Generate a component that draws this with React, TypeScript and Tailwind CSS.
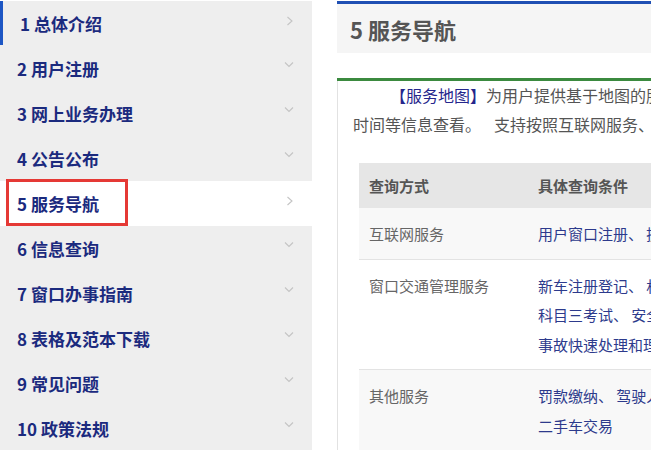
import React from "react";

const FONT = { fontFamily: '"Noto Sans CJK SC", "Noto Sans", sans-serif' };

const items = [
  { label: "1 总体介绍", dir: "right", active: true },
  { label: "2 用户注册", dir: "down" },
  { label: "3 网上业务办理", dir: "down" },
  { label: "4 公告公布", dir: "down" },
  { label: "5 服务导航", dir: "right", selected: true },
  { label: "6 信息查询", dir: "down" },
  { label: "7 窗口办事指南", dir: "down" },
  { label: "8 表格及范本下载", dir: "down" },
  { label: "9 常见问题", dir: "down" },
  { label: "10 政策法规", dir: "down" },
];

function Chevron({ dir }: { dir: string }) {
  if (dir === "right") {
    return (
      <svg width="8" height="10" viewBox="0 0 8 10" className="mb-[6px]">
        <path d="M1.5 1 L6 5 L1.5 9" fill="none" stroke="#c4c4c4" strokeWidth="1.1" />
      </svg>
    );
  }
  return (
    <svg width="10" height="7" viewBox="0 0 10 7" className="mb-[8px]">
      <path d="M1 1.5 L5 5.5 L9 1.5" fill="none" stroke="#c4c4c4" strokeWidth="1.1" />
    </svg>
  );
}

const rows = [
  { name: "互联网服务", lines: ["用户窗口注册、 提交申请、 网上预约"], bg: "bg-[#f8f8f8]" },
  {
    name: "窗口交通管理服务",
    lines: ["新车注册登记、 机动车转移登记", "科目三考试、 安全文明驾驶常识考试", "事故快速处理和理赔"],
    bg: "bg-white",
  },
  { name: "其他服务", lines: ["罚款缴纳、 驾驶人体检", "二手车交易"], bg: "bg-[#f8f8f8]" },
];

export default function App() {
  return (
    <div className="relative w-[651px] h-[450px] overflow-hidden bg-white flex pt-px" style={FONT}>
      {/* Sidebar */}
      <div className="w-[312px] shrink-0 bg-[#eeeeee] flex flex-col">
        {items.map((it) => (
          <div
            key={it.label}
            className={`relative h-[45px] shrink-0 flex items-center justify-between pl-[17px] pr-[18px] ${
              it.selected ? "bg-white" : ""
            }`}
          >
            {it.active && <div className="absolute left-0 top-0 bottom-[1px] w-[3px] bg-[#1d56c4]" />}
            <span className={`text-[17px] font-bold text-[#1b2a7e] ${it.active ? "pl-[3px]" : ""}`}>{it.label}</span>
            <Chevron dir={it.dir} />
          </div>
        ))}
      </div>

      {/* Content */}
      <div className="ml-[25px] w-[620px] shrink-0 flex flex-col">
        <div className="h-[53px] border-t-[3px] border-[#1f4fb3] bg-[#f5f5f5] flex items-center pl-[13px] pt-[2px]">
          <span className="text-[22px] font-bold text-[#555555]">5 服务导航</span>
        </div>
        <div className="mt-[25px] border-t-[3px] border-[#3b8a3f]" />
        <div className="border-l border-[#e2e2e2] pl-[15px] flex flex-col">
          <div className="text-[16px] leading-[29px] text-[#555555]">
            <div className="whitespace-nowrap pl-[37px]">
              <span className="text-[#25268c]">【服务地图】</span>为用户提供基于地图的服务网点位置、办公
            </div>
            <div className="whitespace-nowrap">
              时间等信息查看。<span className="inline-block w-[13px]" />支持按照互联网服务、窗口交通管理服务
            </div>
          </div>

          <div className="mt-[24px] ml-[6px] flex flex-col text-[15px] leading-[29.5px]">
            <div className="flex bg-[#e6e6e6] py-[8px] font-bold text-[#555555]">
              <div className="w-[169px] shrink-0 pl-[10px]">查询方式</div>
              <div className="pl-[10px] whitespace-nowrap">具体查询条件</div>
            </div>
            {rows.map((r, i) => (
              <div
                key={r.name}
                className={`flex ${r.bg} pt-[11px] pb-[10px] ${i < rows.length - 1 ? "border-b border-[#e3e3e3]" : ""}`}
              >
                <div className="w-[169px] shrink-0 pl-[10px] text-[#666666]">{r.name}</div>
                <div className="pl-[10px] text-[#2d3a8c] flex flex-col">
                  {r.lines.map((l) => (
                    <div key={l} className="whitespace-nowrap">
                      {l}
                    </div>
                  ))}
                </div>
              </div>
            ))}
          </div>
        </div>
      </div>

      {/* Red annotation box */}
      <div className="absolute left-[6px] top-[179px] w-[122px] h-[47px] border-[3px] border-[#e53935]" />
    </div>
  );
}
